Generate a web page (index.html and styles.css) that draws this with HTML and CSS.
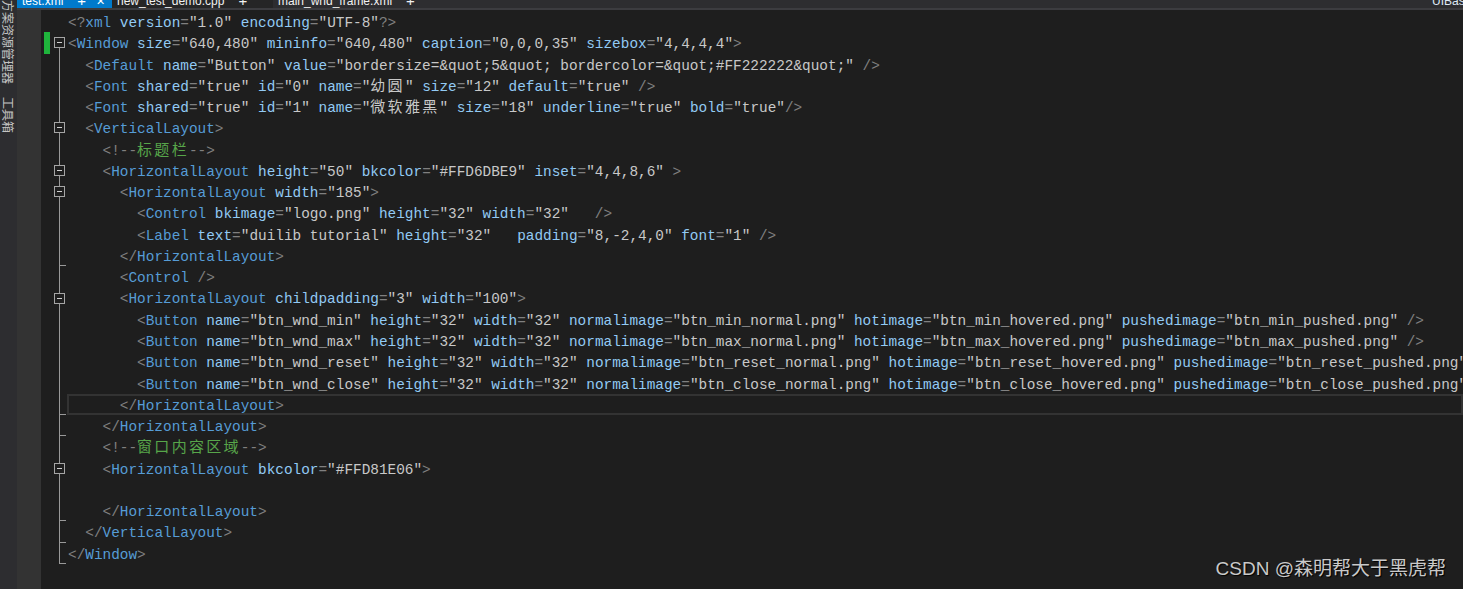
FILE: index.html
```html
<!DOCTYPE html>
<html lang="zh-CN">

<head>
  <meta charset="UTF-8">
  <meta name="viewport" content="width=device-width, initial-scale=1.0">
  <title>test.xml</title>
  <link rel="stylesheet" href="styles.css">
</head>

<body>
  <div class="page">
    <aside class="side">
      <span class="side-tab first">解决方案资源管理器</span>
      <span class="side-tab">工具箱</span>
    </aside>

    <div class="main">
      <div class="tabs">
        <div class="tab active">test.xml<span class="pin">+</span><span class="x">✕</span></div>
        <div class="tab dim">new_test_demo.cpp<span class="pin">+</span></div>
        <div class="tab">main_wnd_frame.xml<span class="pin">+</span></div>
        <div class="tab right">UIBase.h</div>
      </div>

      <div class="body">
        <div class="margin"></div>
        <div class="editor">
          <div class="ln"><span class="chg"></span><span class="fold"></span><span class="code"><span class="d">&lt;?</span><span class="t">xml</span> <span class="a">version</span><span class="d">=</span>"1.0" <span class="a">encoding</span><span class="d">=</span>"UTF-8"<span class="d">?&gt;</span></span></div>
          <div class="ln"><span class="chg on"></span><span class="fold top"><span class="box"></span></span><span class="code"><span class="d">&lt;</span><span class="t">Window</span> <span class="a">size</span><span class="d">=</span>"640,480" <span class="a">mininfo</span><span class="d">=</span>"640,480" <span class="a">caption</span><span class="d">=</span>"0,0,0,35" <span class="a">sizebox</span><span class="d">=</span>"4,4,4,4"<span class="d">&gt;</span></span></div>
          <div class="ln"><span class="chg"></span><span class="fold v"></span><span class="code">  <span class="d">&lt;</span><span class="t">Default</span> <span class="a">name</span><span class="d">=</span>"Button" <span class="a">value</span><span class="d">=</span>"bordersize=&amp;quot;5&amp;quot; bordercolor=&amp;quot;#FF222222&amp;quot;" <span class="d">/&gt;</span></span></div>
          <div class="ln"><span class="chg"></span><span class="fold v"></span><span class="code">  <span class="d">&lt;</span><span class="t">Font</span> <span class="a">shared</span><span class="d">=</span>"true" <span class="a">id</span><span class="d">=</span>"0" <span class="a">name</span><span class="d">=</span>"<span class="zh">幼圆</span>" <span class="a">size</span><span class="d">=</span>"12" <span class="a">default</span><span class="d">=</span>"true" <span class="d">/&gt;</span></span></div>
          <div class="ln"><span class="chg"></span><span class="fold v"></span><span class="code">  <span class="d">&lt;</span><span class="t">Font</span> <span class="a">shared</span><span class="d">=</span>"true" <span class="a">id</span><span class="d">=</span>"1" <span class="a">name</span><span class="d">=</span>"<span class="zh">微软雅黑</span>" <span class="a">size</span><span class="d">=</span>"18" <span class="a">underline</span><span class="d">=</span>"true" <span class="a">bold</span><span class="d">=</span>"true"<span class="d">/&gt;</span></span></div>
          <div class="ln"><span class="chg"></span><span class="fold v"><span class="box"></span></span><span class="code">  <span class="d">&lt;</span><span class="t">VerticalLayout</span><span class="d">&gt;</span></span></div>
          <div class="ln"><span class="chg"></span><span class="fold v"></span><span class="code">    <span class="d">&lt;!--</span><span class="c zh">标题栏</span><span class="d">--&gt;</span></span></div>
          <div class="ln"><span class="chg"></span><span class="fold v"><span class="box"></span></span><span class="code">    <span class="d">&lt;</span><span class="t">HorizontalLayout</span> <span class="a">height</span><span class="d">=</span>"50" <span class="a">bkcolor</span><span class="d">=</span>"#FFD6DBE9" <span class="a">inset</span><span class="d">=</span>"4,4,8,6" <span class="d">&gt;</span></span></div>
          <div class="ln"><span class="chg"></span><span class="fold v"><span class="box"></span></span><span class="code">      <span class="d">&lt;</span><span class="t">HorizontalLayout</span> <span class="a">width</span><span class="d">=</span>"185"<span class="d">&gt;</span></span></div>
          <div class="ln"><span class="chg"></span><span class="fold v"></span><span class="code">        <span class="d">&lt;</span><span class="t">Control</span> <span class="a">bkimage</span><span class="d">=</span>"logo.png" <span class="a">height</span><span class="d">=</span>"32" <span class="a">width</span><span class="d">=</span>"32"   <span class="d">/&gt;</span></span></div>
          <div class="ln"><span class="chg"></span><span class="fold v"></span><span class="code">        <span class="d">&lt;</span><span class="t">Label</span> <span class="a">text</span><span class="d">=</span>"duilib tutorial" <span class="a">height</span><span class="d">=</span>"32"   <span class="a">padding</span><span class="d">=</span>"8,-2,4,0" <span class="a">font</span><span class="d">=</span>"1" <span class="d">/&gt;</span></span></div>
          <div class="ln"><span class="chg"></span><span class="fold v end"></span><span class="code">      <span class="d">&lt;/</span><span class="t">HorizontalLayout</span><span class="d">&gt;</span></span></div>
          <div class="ln"><span class="chg"></span><span class="fold v"></span><span class="code">      <span class="d">&lt;</span><span class="t">Control</span> <span class="d">/&gt;</span></span></div>
          <div class="ln"><span class="chg"></span><span class="fold v"><span class="box"></span></span><span class="code">      <span class="d">&lt;</span><span class="t">HorizontalLayout</span> <span class="a">childpadding</span><span class="d">=</span>"3" <span class="a">width</span><span class="d">=</span>"100"<span class="d">&gt;</span></span></div>
          <div class="ln"><span class="chg"></span><span class="fold v"></span><span class="code">        <span class="d">&lt;</span><span class="t">Button</span> <span class="a">name</span><span class="d">=</span>"btn_wnd_min" <span class="a">height</span><span class="d">=</span>"32" <span class="a">width</span><span class="d">=</span>"32" <span class="a">normalimage</span><span class="d">=</span>"btn_min_normal.png" <span class="a">hotimage</span><span class="d">=</span>"btn_min_hovered.png" <span class="a">pushedimage</span><span class="d">=</span>"btn_min_pushed.png" <span class="d">/&gt;</span></span></div>
          <div class="ln"><span class="chg"></span><span class="fold v"></span><span class="code">        <span class="d">&lt;</span><span class="t">Button</span> <span class="a">name</span><span class="d">=</span>"btn_wnd_max" <span class="a">height</span><span class="d">=</span>"32" <span class="a">width</span><span class="d">=</span>"32" <span class="a">normalimage</span><span class="d">=</span>"btn_max_normal.png" <span class="a">hotimage</span><span class="d">=</span>"btn_max_hovered.png" <span class="a">pushedimage</span><span class="d">=</span>"btn_max_pushed.png" <span class="d">/&gt;</span></span></div>
          <div class="ln"><span class="chg"></span><span class="fold v"></span><span class="code">        <span class="d">&lt;</span><span class="t">Button</span> <span class="a">name</span><span class="d">=</span>"btn_wnd_reset" <span class="a">height</span><span class="d">=</span>"32" <span class="a">width</span><span class="d">=</span>"32" <span class="a">normalimage</span><span class="d">=</span>"btn_reset_normal.png" <span class="a">hotimage</span><span class="d">=</span>"btn_reset_hovered.png" <span class="a">pushedimage</span><span class="d">=</span>"btn_reset_pushed.png" <span class="d">/&gt;</span></span></div>
          <div class="ln"><span class="chg"></span><span class="fold v"></span><span class="code">        <span class="d">&lt;</span><span class="t">Button</span> <span class="a">name</span><span class="d">=</span>"btn_wnd_close" <span class="a">height</span><span class="d">=</span>"32" <span class="a">width</span><span class="d">=</span>"32" <span class="a">normalimage</span><span class="d">=</span>"btn_close_normal.png" <span class="a">hotimage</span><span class="d">=</span>"btn_close_hovered.png" <span class="a">pushedimage</span><span class="d">=</span>"btn_close_pushed.png" <span class="d">/&gt;</span></span></div>
          <div class="ln"><span class="chg"></span><span class="fold v end"></span><span class="code current">      <span class="d">&lt;/</span><span class="t">HorizontalLayout</span><span class="d">&gt;</span></span></div>
          <div class="ln"><span class="chg"></span><span class="fold v end"></span><span class="code">    <span class="d">&lt;/</span><span class="t">HorizontalLayout</span><span class="d">&gt;</span></span></div>
          <div class="ln"><span class="chg"></span><span class="fold v"></span><span class="code">    <span class="d">&lt;!--</span><span class="c zh">窗口内容区域</span><span class="d">--&gt;</span></span></div>
          <div class="ln"><span class="chg"></span><span class="fold v"><span class="box"></span></span><span class="code">    <span class="d">&lt;</span><span class="t">HorizontalLayout</span> <span class="a">bkcolor</span><span class="d">=</span>"#FFD81E06"<span class="d">&gt;</span></span></div>
          <div class="ln"><span class="chg"></span><span class="fold v"></span><span class="code"></span></div>
          <div class="ln"><span class="chg"></span><span class="fold v end"></span><span class="code">    <span class="d">&lt;/</span><span class="t">HorizontalLayout</span><span class="d">&gt;</span></span></div>
          <div class="ln"><span class="chg"></span><span class="fold v end"></span><span class="code">  <span class="d">&lt;/</span><span class="t">VerticalLayout</span><span class="d">&gt;</span></span></div>
          <div class="ln"><span class="chg"></span><span class="fold v end"></span><span class="code"><span class="d">&lt;/</span><span class="t">Window</span><span class="d">&gt;</span></span></div>
        </div>
      </div>
    </div>

    <div class="mark">CSDN @森明帮大于黑虎帮</div>
  </div>
</body>

</html>
```

FILE: styles.css
```css
html,
body {
  margin: 0;
  height: 100%;
  background: #1e1e1e;
  overflow: hidden;
}

.page {
  position: relative;
  display: flex;
  height: 100%;
}

/* 왼쪽 도구창 탭 */
.side {
  width: 17px;
  flex: none;
  background: #2d2d30;
  display: flex;
  flex-direction: column;
  align-items: center;
  overflow: hidden;
}

.side-tab {
  writing-mode: vertical-rl;
  text-orientation: sideways;
  font-family: "Noto Sans CJK SC", sans-serif;
  font-size: 12px;
  line-height: 17px;
  color: #c4c4c4;
  margin-top: 13px;
}

.side-tab.first {
  margin-top: -24px;
}

.main {
  flex: 1;
  min-width: 0;
  display: flex;
  flex-direction: column;
}

/* 문서 탭 */
.tabs {
  height: 8px;
  flex: none;
  display: flex;
  align-items: flex-end;
  overflow: hidden;
  background: #2d2d30;
  border-bottom: 2px solid #3c3c40;
  font-family: "Liberation Sans", "Noto Sans", sans-serif;
  font-size: 12px;
  color: #f1f1f1;
}

.tab {
  height: 20px;
  display: flex;
  align-items: flex-end;
  line-height: 14px;
  padding: 0 4px 0 5px;
  white-space: nowrap;
}

.tab.active {
  width: 95px;
  box-sizing: border-box;
  background: #007acc;
  color: #fff;
}

.tab.dim {
  width: 161px;
  box-sizing: border-box;
  background: #252526;
}

.tab .pin {
  margin-left: 14px;
  font-size: 15px;
}

.tab .x {
  margin-left: 10px;
  font-size: 11px;
}

.tab.right {
  margin-left: auto;
  width: 31px;
  padding: 0;
  overflow: hidden;
  color: #dfe9f5;
}

.body {
  flex: 1;
  display: flex;
  min-height: 0;
}

.margin {
  width: 24px;
  flex: none;
  background: #333333;
}

/* 에디터 */
.editor {
  flex: 1;
  min-width: 0;
  overflow: hidden;
  padding-top: 1px;
  font-family: "Liberation Mono", monospace;
  font-size: 14.4px;
  color: #c8c8c8;
}

.ln {
  display: flex;
  height: 21.28px;
  line-height: 21.28px;
}

.chg {
  width: 11px;
  flex: none;
}

.chg.on {
  background: linear-gradient(#1fb43c, #1fb43c) 3px 0 / 6px 100% no-repeat;
}

.fold {
  width: 15px;
  flex: none;
  display: flex;
  align-items: center;
}

.fold.v {
  background: linear-gradient(#999, #999) 7px 0 / 1px 100% no-repeat;
}

.fold.top {
  background: linear-gradient(#999, #999) 7px 100% / 1px 50% no-repeat;
}

.fold.end {
  background:
    linear-gradient(#999, #999) 7px 100% / 7px 1px no-repeat,
    linear-gradient(#999, #999) 7px 0 / 1px 100% no-repeat;
}

.box {
  width: 11px;
  height: 11px;
  margin-left: 2px;
  box-sizing: border-box;
  border: 1px solid #a5a5a5;
  background: #1e1e1e;
  display: flex;
  align-items: center;
  justify-content: center;
}

.box::after {
  content: '';
  width: 5px;
  height: 1px;
  background: #d0d0d0;
}

.code {
  flex: 1;
  padding-left: 1px;
  padding-top: 2px;
  box-sizing: border-box;
  white-space: pre;
}

.code.current {
  box-shadow: inset 0 0 0 2px #333333;
}

.d {
  color: #808080;
}

.t {
  color: #569cd6;
}

.a {
  color: #92caf4;
}

.c {
  color: #57a64a;
}

.zh {
  font-family: "Noto Sans CJK SC", sans-serif;
  font-size: 15px;
  line-height: 0;
  letter-spacing: 2.28px;
}

.mark {
  position: absolute;
  right: 17px;
  top: 556px;
  font-family: "Liberation Sans", "Noto Sans CJK SC", sans-serif;
  font-size: 19px;
  line-height: 26px;
  color: #c9c9c9;
  text-shadow: 1px 1px 1px #000;
}
```
